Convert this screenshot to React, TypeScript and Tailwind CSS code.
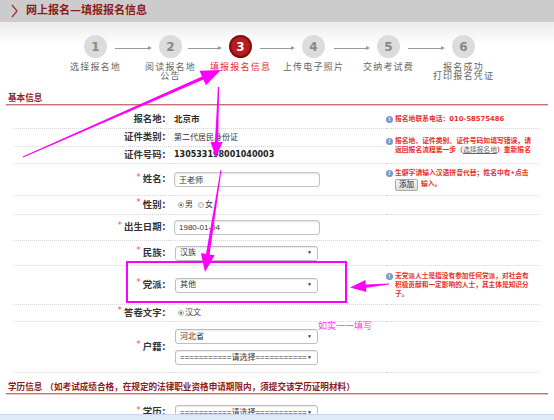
import React from 'react'

const cell = 'border-b border-dotted border-[#d6d6d6]'

function Star() {
  return <span className="mr-[2px] -translate-y-[2px] text-[9px] font-normal text-[#f25a5a]">*</span>
}

function Info() {
  return (
    <span className="mr-[2px] mt-[1px] flex h-[7px] w-[7px] shrink-0 items-center justify-center rounded-full bg-[#7b98c9] text-[5px] font-bold leading-none text-white">
      !
    </span>
  )
}

function Field({ value }: { value: string }) {
  return (
    <input
      readOnly
      defaultValue={value}
      className="h-[15px] w-[146px] rounded-[3px] border border-[#c4c4c4] bg-white pl-[4px] font-['Liberation_Sans','Noto_Sans_CJK_SC',sans-serif] text-[8px] text-[#333] shadow-[inset_0_1px_2px_rgba(0,0,0,0.12)] outline-none"
    />
  )
}

function Select({ value }: { value: string }) {
  return (
    <div className="flex h-[15px] w-[143px] items-center justify-between rounded-[3px] border border-[#bdbdbd] bg-white pl-[4px] pr-[5px] font-['Liberation_Sans','Noto_Sans_CJK_SC',sans-serif] text-[8px] text-[#333] shadow-[inset_0_1px_1px_rgba(0,0,0,0.08)]">
      <span className="whitespace-nowrap">{value}</span>
      <span className="text-[5px]">▼</span>
    </div>
  )
}

function Radio({ label, checked }: { label: string; checked?: boolean }) {
  return (
    <span className="mr-[5px] flex items-center text-[8px] text-[#444]">
      <span className="mr-[1px] flex h-[6px] w-[6px] items-center justify-center rounded-full border border-[#b5b5b5] bg-[#eeeeee]">
        {checked && <span className="h-[2px] w-[2px] rounded-full bg-[#555]" />}
      </span>
      {label}
    </span>
  )
}

function Label({ text, req }: { text: string; req?: boolean }) {
  return (
    <div className={`${cell} flex items-center justify-end text-[9.4px] font-bold text-[#333]`}>
      {req && <Star />}
      {text}：
    </div>
  )
}

const steps = [
  { n: '1', label: ['选择报名地'] },
  { n: '2', label: ['阅读报名地', '公告'] },
  { n: '3', label: ['填报报名信息'], active: true },
  { n: '4', label: ['上传电子照片'] },
  { n: '5', label: ['交纳考试费'] },
  { n: '6', label: ['报名成功', '打印报名凭证'] },
]

// gaps between circles: [ml, line width, mr]
const links = [
  [8, 37, 7],
  [6, 34, 7],
  [8, 35, 7],
  [9, 36, 7],
  [8, 37, 7],
]

function Link({ ml, w, mr }: { ml: number; w: number; mr: number }) {
  return (
    <div className="mt-[11px] flex items-center" style={{ marginLeft: ml, marginRight: mr, width: w }}>
      <div className="h-px flex-1 bg-[#9a9a9a]" />
      <div className="h-0 w-0 border-y-[2px] border-l-[4px] border-y-transparent border-l-[#9a9a9a]" />
    </div>
  )
}

export default function App() {
  return (
    <div className="relative min-h-[420px] w-[554px] overflow-hidden bg-white font-['DejaVu_Sans','Noto_Sans_CJK_SC',sans-serif]">
      {/* title bar */}
      <div className="flex h-[22px] items-center bg-[#cccccc]">
        <svg width="26" height="22" viewBox="0 0 26 22">
          <polyline points="12,5 17,11 12,17" fill="none" stroke="#a33a3a" strokeWidth="1.4" />
        </svg>
        <span className="text-[11px] font-bold text-[#8b1c1c]">网上报名—填报报名信息</span>
      </div>

      {/* steps */}
      <div className="bg-gradient-to-b from-[#ececec] to-white to-[40%]">
        <div className="flex items-start pl-[84px] pt-[13px]">
          {steps.map((s, i) => (
            <React.Fragment key={s.n}>
              <div className="flex w-[23px] flex-col items-center">
                <div
                  className={
                    s.active
                      ? 'flex h-[23px] w-[23px] items-center justify-center rounded-full border-2 border-[#7c0f0f] bg-[#b81c1c] text-[12px] font-bold text-white'
                      : 'flex h-[23px] w-[23px] items-center justify-center rounded-full bg-[#dcdcdc] text-[12px] font-bold text-[#888]'
                  }
                >
                  {s.n}
                </div>
                <div
                  className={`mt-[5px] whitespace-nowrap text-center text-[9px] leading-[9px] tracking-[1.2px] ${
                    s.active ? 'text-[#ee2b2b]' : 'text-[#666]'
                  }`}
                >
                  {s.label.map((l) => (
                    <div key={l}>{l}</div>
                  ))}
                </div>
              </div>
              {i < links.length && <Link ml={links[i][0]} w={links[i][1]} mr={links[i][2]} />}
            </React.Fragment>
          ))}
        </div>
      </div>

      {/* basic info */}
      <div className="mx-[6px] mt-[12px]">
        <div className="h-[11px] pl-[2px] text-[8.6px] font-bold leading-[11px] text-[#8b1c1c]">基本信息</div>
        <div className="h-px bg-[#c27272]" />
        <div className="h-px bg-[#ecc6c6]" />
      </div>

      <div className="ml-[14px] mt-[4px] grid w-[526px] grid-cols-[157px_215px_154px] grid-rows-[19px_18px_17px_32px_19px_26px_25px_39px_17px_51px]">
        <Label text="报名地" />
        <div className={`${cell} flex items-center pl-[3px] text-[8.5px] font-bold text-[#222]`}>北京市</div>
        <div className={`${cell} flex items-center text-[6.8px] font-bold text-[#e8302b]`}>
          <Info />
          <span className="whitespace-nowrap">报名地联系电话：010-58575486</span>
        </div>

        <Label text="证件类别" />
        <div className={`${cell} flex items-center pl-[3px] text-[8px] text-[#333]`}>第二代居民身份证</div>
        <div className={`${cell} row-span-2 flex items-center text-[6.8px] font-bold leading-[9px] text-[#e8302b]`}>
          <div className="flex items-start">
            <Info />
            <div className="whitespace-nowrap">
              <div>报名地、证件类别、证件号码如填写错误，请</div>
              <div>
                返回报名流程第一步（<span className="font-normal text-[#666] underline">选择报名地</span>）重新报名
              </div>
            </div>
          </div>
        </div>

        <Label text="证件号码" />
        <div className={`${cell} flex items-center pl-[3px] text-[8px] font-bold text-[#222]`}>130533198001040003</div>

        <Label text="姓名" req />
        <div className={`${cell} flex items-center pl-[3px]`}>
          <Field value="王老师" />
        </div>
        <div className={`${cell} flex items-center text-[6.8px] font-bold leading-[9px] text-[#e8302b]`}>
          <div className="flex items-start">
            <Info />
            <div className="whitespace-nowrap">
              <div>生僻字请输入汉语拼音代替；姓名中有•点击</div>
              <div className="mt-[1px] flex items-center">
                <span className="mr-[3px] rounded-[2px] border border-[#a8a8a8] bg-gradient-to-b from-[#f6f6f6] to-[#dcdcdc] px-[3px] text-[7.5px] font-normal leading-[10px] text-[#111]">
                  添加
                </span>
                输入。
              </div>
            </div>
          </div>
        </div>

        <Label text="性别" req />
        <div className={`${cell} flex items-center pl-[7px]`}>
          <Radio label="男" checked />
          <Radio label="女" />
        </div>
        <div className={cell} />

        <Label text="出生日期" req />
        <div className={`${cell} flex items-center pl-[3px]`}>
          <Field value="1980-01-04" />
        </div>
        <div className={cell} />

        <Label text="民族" req />
        <div className={`${cell} flex items-center pl-[4px]`}>
          <Select value="汉族" />
        </div>
        <div className={cell} />

        <Label text="党派" req />
        <div className={`${cell} flex items-center pl-[4px]`}>
          <Select value="其他" />
        </div>
        <div className={`${cell} flex items-center text-[6.7px] font-bold leading-[9px] text-[#e8302b]`}>
          <div className="flex items-start">
            <Info />
            <div className="whitespace-nowrap">
              <div>无党派人士是指没有参加任何党派，对社会有</div>
              <div>积极贡献和一定影响的人士，其主体是知识分</div>
              <div>子。</div>
            </div>
          </div>
        </div>

        <Label text="答卷文字" req />
        <div className={`${cell} flex items-center pl-[7px]`}>
          <Radio label="汉文" checked />
        </div>
        <div className={cell} />

        <Label text="户籍" req />
        <div className={`${cell} flex flex-col justify-center gap-[6px] pl-[4px]`}>
          <Select value="河北省" />
          <Select value="===========请选择===========" />
        </div>
        <div className={cell} />
      </div>

      {/* education */}
      <div className="mx-[6px] mt-[8px]">
        <div className="h-[12px] pl-[2px] text-[8.6px] font-bold leading-[12px] text-[#8b1c1c] whitespace-nowrap">
          学历信息 （如考试成绩合格，在规定的法律职业资格申请期限内，须提交该学历证明材料）
        </div>
        <div className="h-px bg-[#c27272]" />
        <div className="h-px bg-[#ecc6c6]" />
      </div>
      <div className="ml-[14px] mt-[10px] grid h-[15px] grid-cols-[157px_215px]">
        <div className="flex items-center justify-end text-[9.4px] font-bold text-[#333]">
          <Star />
          学历：
        </div>
        <div className="flex items-center pl-[4px]">
          <Select value="===========请选择===========" />
        </div>
      </div>

      {/* annotations */}
      <svg className="pointer-events-none absolute left-0 top-0" width="554" height="420" viewBox="0 0 554 420">
        <g fill="#ff00ff">
          <polygon points="22.8,156.54 202.0,76.4 199.5,70.7 221,70 205.9,85.3 203.4,79.6 23.2,157.46" />
          <polygon points="217.9,87 215,142 210.6,142 216,158 222.6,142 218.2,142 219.1,87" />
          <polygon points="220.5,169.9 206.0,253.9 200.9,253.1 205,272 214.7,255.3 209.6,254.5 221.5,170.1" />
          <polygon points="388.95,283.4 365.8,284.5 365.4,280.1 350,287.5 366.4,292.1 366.0,287.7 389.05,284.6" />
        </g>
        <rect x="127" y="262" width="219" height="40" fill="none" stroke="#ff00ff" strokeWidth="2" />
      </svg>
      <span className="pointer-events-none absolute left-[318px] top-[321px] text-[9px] leading-[11px] text-[#ff33ff]">如实一一填写</span>

      <div className="fixed bottom-0 left-0 right-0 h-[6px] border-t border-[#c6d8ef] bg-[#dfeaf8]" />
    </div>
  )
}
